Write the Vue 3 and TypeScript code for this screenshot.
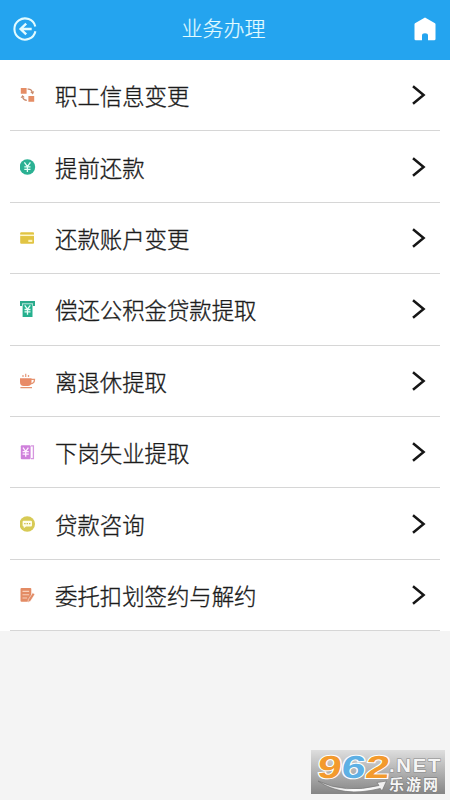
<script setup lang="ts">
interface MenuItem {
  icon: string
  label: string
}

const items: MenuItem[] = [
  { icon: 'swap', label: '职工信息变更' },
  { icon: 'yen', label: '提前还款' },
  { icon: 'card', label: '还款账户变更' },
  { icon: 'atm', label: '偿还公积金贷款提取' },
  { icon: 'cup', label: '离退休提取' },
  { icon: 'book', label: '下岗失业提取' },
  { icon: 'chat', label: '贷款咨询' },
  { icon: 'sign', label: '委托扣划签约与解约' },
]
</script>

<template>
  <div class="page">
    <header class="bar">
      <svg class="back" viewBox="0 0 24 26" fill="none" stroke="#e2fbff" stroke-width="2.1">
        <path d="M22.3 10.4A10.6 10.6 0 1 0 22.4 15.2" />
        <path d="M18.7 13H8M13.2 7.6L7.6 13l5.6 5.4" stroke-width="2.4" />
      </svg>
      <h1>业务办理</h1>
      <svg class="home" viewBox="0 0 22 24">
        <path d="M11 .6L21 6.2q.5.4.5 1V22q0 1.3-1.3 1.3H14V18.5q0-2.2-3-2.2T8 18.5v4.8H1.8Q.5 23.3.5 22V7.2q0-.6.5-1z" fill="#fff" />
      </svg>
    </header>

    <ul class="list">
      <li v-for="item in items" :key="item.label" class="row">
        <svg class="icon" viewBox="0 0 16 18">
          <g v-if="item.icon === 'swap'" fill="#e58d65">
            <path d="M.8 2h5.800v5.800H.8zM8.400 10h5.800v5.800H8.400z" />
            <path d="M7.600 3.200Q11 2.600 12.200 6M6.800 14.400Q3.500 14 2.700 11.500" fill="none" stroke="#c88a6c" stroke-width="1.200" />
            <path d="M10.200 6l4-.8-1.300 3.300zM.6 11.900l1.800-2.800 2.400 2.100z" fill="#c88a6c" />
          </g>
          <g v-else-if="item.icon === 'yen'">
            <circle cx="7.400" cy="9" r="7.800" fill="#2bb193" />
            <path d="M4.400 4.400l3 4.200 3-4.200M7.400 8.600v5.400M4.300 8.900h6.200M4.300 11.300h6.200" fill="none" stroke="#e6fff8" stroke-width="1.300" />
          </g>
          <g v-else-if="item.icon === 'card'">
            <rect x=".2" y="3.200" width="13.800" height="11.600" rx="1" fill="#e1c443" />
            <path d="M0 6.300h14.200" stroke="#fff8cd" stroke-width="1.500" />
            <rect x="8.300" y="10.800" width="4" height="2.200" fill="#fff3b8" />
          </g>
          <g v-else-if="item.icon === 'atm'">
            <path d="M0 1h15v5h-2V3.600H2V6H0z" fill="#2aaa8c" />
            <path d="M2.600 4.200h9.900V17H2.600z" fill="#25b08e" />
            <path d="M4.700 5.400l2.800 3.700 2.800-3.700M7.500 9v5.800M4.500 9.500h6M4.500 11.900h6" fill="none" stroke="#e9fff8" stroke-width="1.300" />
          </g>
          <g v-else-if="item.icon === 'cup'">
            <path d="M0 6.300h11.500v3.700q0 4-3.700 4H3.700q-3.700 0-3.700-4z" fill="#e88b68" />
            <path d="M11 7.300h3.500q0 4.500-4 4.500M.4 15.700H12" fill="none" stroke="#e5936f" stroke-width="1.300" />
            <path d="M3 5V3M5.700 5V1.700M8.500 5V3" stroke="#e5a084" stroke-width="1.300" />
          </g>
          <g v-else-if="item.icon === 'book'">
            <rect x=".8" y="2.200" width="9.800" height="14" rx="1" fill="#cf80db" />
            <path d="M11 2.900h2.400v12.700H11" fill="none" stroke="#d696df" stroke-width="1.300" />
            <path d="M3 4.600l2.700 3.800 2.700-3.800M5.700 8.400v5.300M2.600 8.700h6.200M2.600 11.100h6.200" fill="none" stroke="#fff0ff" stroke-width="1.300" />
          </g>
          <g v-else-if="item.icon === 'chat'">
            <circle cx="7.200" cy="9" r="7.800" fill="#d7ca55" />
            <path d="M3.600 5.800h7.200q1.200 0 1.200 1.200v3.200q0 1.200-1.200 1.200H6l-2.200 1.800v-1.800q-1.200 0-1.200-1.200V7q0-1.200 1-1.200z" fill="#fffdec" />
            <path d="M4.200 8h1.400v1.300H4.200zM6.600 8H8v1.300H6.600zM9 8h1.400v1.300H9z" fill="#cfc04b" />
          </g>
          <g v-else>
            <path d="M1.500 2h8.800q1 0 1 1v7L8.500 15.800h-7q-1 0-1-1V3q0-1 1-1z" fill="#e38b64" />
            <path d="M2.500 5.400h6.600M2.500 8.700h6.600M2.500 12h4.600" stroke="#f8d0bb" stroke-width="1.100" />
            <path d="M12.700 6.800l2.100 1.500-4.200 6.800-2.700 1.300.5-3z" fill="#e18b66" stroke="#fff" stroke-width=".5" />
          </g>
        </svg>
        <span class="label">{{ item.label }}</span>
        <svg class="arrow" viewBox="0 0 14 20" fill="none" stroke="#161616" stroke-width="2.500">
          <path d="M1 1.200L11.600 10 1 18.800" />
        </svg>
      </li>
    </ul>

    <svg class="mark" viewBox="0 0 134 44">
      <defs>
        <linearGradient id="plate" x1="0" y1="0" x2="0" y2="1">
          <stop offset="0" stop-color="#dedede" />
          <stop offset="1" stop-color="#858585" />
        </linearGradient>
        <linearGradient id="swoosh" x1="0" y1="0" x2="1" y2="0">
          <stop offset="0" stop-color="#c9c9c9" />
          <stop offset=".5" stop-color="#fff" />
          <stop offset="1" stop-color="#eee" />
        </linearGradient>
      </defs>
      <rect width="134" height="44" fill="url(#plate)" />
      <path d="M7 31Q34 44 68 35.500L66 32.500l9.500-1.500-4.500 10-1.700-2.500Q31 48 7 31z" fill="url(#swoosh)" stroke="#777" stroke-width=".7" />
      <g class="digits" transform="translate(3 0) skewX(-7)">
        <text x="6" y="27.500" textLength="24" lengthAdjust="spacingAndGlyphs" fill="#f39a2d">9</text>
        <text x="30" y="27.500" textLength="24" lengthAdjust="spacingAndGlyphs" fill="#5eb0e4">6</text>
        <text x="54" y="27.500" textLength="24" lengthAdjust="spacingAndGlyphs" fill="#f39a2d">2</text>
      </g>
      <text class="net" x="78" y="21.500" textLength="53" lengthAdjust="spacingAndGlyphs">.NET</text>
      <text class="site" x="78" y="39.500" textLength="49">乐游网</text>
    </svg>
  </div>
</template>

<style>
body {
  margin: 0;
  background: #f4f4f4;
}
</style>

<style scoped>
.page {
  position: relative;
  height: 800px;
  overflow: hidden;
  background: #f4f4f4;
  font-family: "Noto Sans CJK SC", sans-serif;
}
.bar {
  display: flex;
  align-items: center;
  justify-content: space-between;
  box-sizing: border-box;
  height: 60px;
  padding: 0 14px 2px 13px;
  background: #24a4ef;
}
.back {
  width: 24px;
  height: 26px;
}
.home {
  width: 22px;
  height: 24px;
}
h1 {
  margin: 0;
  padding: 0 4px 4px 0;
  color: #e2fbff;
  font-size: 21px;
  font-weight: 300;
  line-height: 30px;
  -webkit-text-stroke: 0.2px #e2fbff;
}
.list {
  margin: 0;
  padding: 0 10px;
  list-style: none;
  background: #fff;
}
.row {
  display: flex;
  align-items: center;
  box-sizing: border-box;
  height: 71.4px;
  padding: 0 14px 0 10px;
  border-bottom: 1px solid #d6d6d6;
}
.icon {
  flex: none;
  width: 16px;
  height: 18px;
}
.label {
  flex: 1;
  margin-left: 19px;
  color: #1c1c1c;
  font-size: 22.4px;
  font-weight: 300;
  line-height: 34px;
  white-space: nowrap;
  -webkit-text-stroke: 0.35px #1c1c1c;
}
.arrow {
  width: 14px;
  height: 20px;
}
.mark {
  position: absolute;
  left: 311px;
  top: 750px;
  width: 134px;
  height: 44px;
  overflow: visible;
}
.digits {
  font: bold 32px "Liberation Sans", sans-serif;
  stroke: #fff;
  stroke-width: 2px;
  paint-order: stroke;
}
.net {
  font: bold 18px "Liberation Sans", sans-serif;
  letter-spacing: 1.5px;
  fill: #f5f5f5;
  stroke: #888;
  stroke-width: 1px;
  paint-order: stroke;
}
.site {
  font-size: 15px;
  font-weight: 700;
  fill: #f5f5f5;
  stroke: #777;
  stroke-width: 1px;
  paint-order: stroke;
}
</style>
